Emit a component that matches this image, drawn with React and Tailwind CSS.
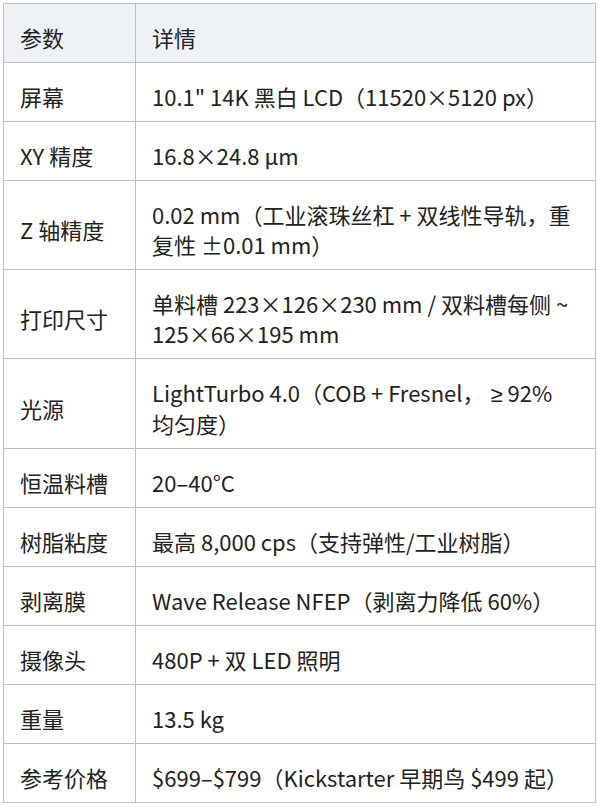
import React from 'react';

const rows = [
  ['屏幕', '10.1" 14K 黑白 LCD（11520×5120 px）'],
  ['XY 精度', '16.8×24.8 µm'],
  ['Z 轴精度', '0.02 mm（工业滚珠丝杠 + 双线性导轨，重复性 ±0.01 mm）'],
  ['打印尺寸', '单料槽 223×126×230 mm / 双料槽每侧 ~ 125×66×195 mm'],
  [
    '光源',
    <>
      LightTurbo 4.0（COB + Fresnel，<span className="pl-[6px] pr-[5px] font-['Noto_Sans',sans-serif]">≥</span>92% 均匀度）
    </>,
  ],
  ['恒温料槽', '20–40°C'],
  ['树脂粘度', '最高 8,000 cps（支持弹性/工业树脂）'],
  ['剥离膜', 'Wave Release NFEP（剥离力降低 60%）'],
  ['摄像头', '480P + 双 LED 照明'],
  ['重量', '13.5 kg'],
  ['参考价格', '$699–$799（Kickstarter 早期鸟 $499 起）'],
];

// cell padding is a bit heavier on top, like the screenshot
const cell = 'border border-[#bfbfbf] px-4 pt-[18px] pb-[10px] text-left align-middle';

export default function App() {
  return (
    <div className="bg-white pt-[3px] pl-[3px] font-['Noto_Sans_CJK_SC','Noto_Sans',sans-serif] text-[22px] leading-[30px] text-[#222]">
      <table className="w-[593px] border-collapse border border-[#bfbfbf] table-fixed">
        <colgroup>
          <col className="w-[132px]" />
          <col />
        </colgroup>
        <thead>
          <tr className="bg-[#eef2f7]">
            <th className={`${cell} font-normal`}>参数</th>
            <th className={`${cell} font-normal`}>详情</th>
          </tr>
        </thead>
        <tbody>
          {rows.map(([k, v]) => (
            <tr key={k}>
              <td className={cell}>{k}</td>
              <td className={cell}>{v}</td>
            </tr>
          ))}
        </tbody>
      </table>
    </div>
  );
}
